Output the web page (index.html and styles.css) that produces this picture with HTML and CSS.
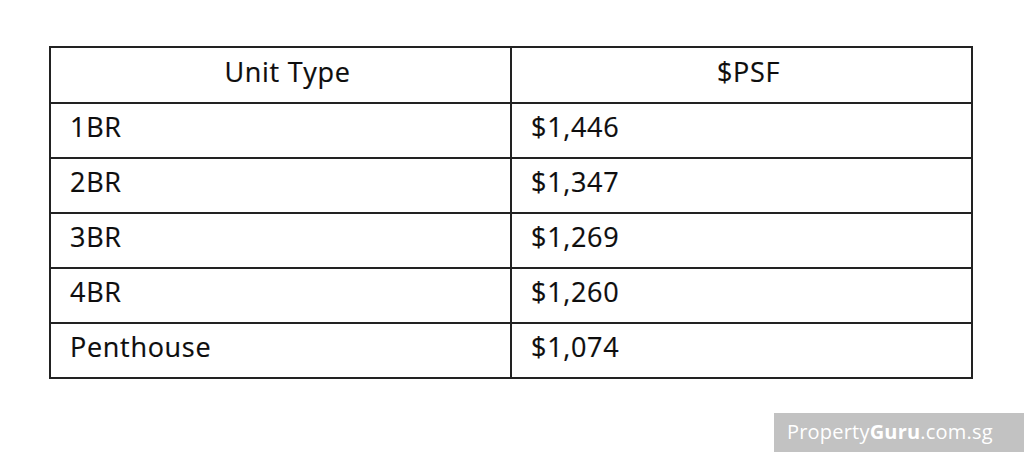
FILE: index.html
```html
<!DOCTYPE html>
<html>
<head>
<meta charset="utf-8">
<link rel="stylesheet" href="styles.css">
</head>
<body>
<div class="page">
  <table class="psf">
    <thead>
      <tr><th class="c1">Unit Type</th><th class="c2">$PSF</th></tr>
    </thead>
    <tbody>
      <tr><td>1BR</td><td>$1,446</td></tr>
      <tr><td>2BR</td><td>$1,347</td></tr>
      <tr><td>3BR</td><td>$1,269</td></tr>
      <tr><td>4BR</td><td>$1,260</td></tr>
      <tr><td>Penthouse</td><td>$1,074</td></tr>
    </tbody>
  </table>
  <div class="mark">Property<b>Guru</b>.com.sg</div>
</div>
</body>
</html>
```
FILE: styles.css
```css
html, body {
  margin: 0;
  padding: 0;
  background: #fff;
}
.page {
  width: 1024px;
  height: 452px;
  position: relative;
  overflow: hidden;
  padding-top: 46px;
  padding-left: 49px;
  box-sizing: border-box;
}
.psf {
  border-collapse: collapse;
  width: 924px;
  font-family: "Open Sans", "Noto Sans", sans-serif;
  font-size: 27px;
  letter-spacing: 0.7px;
  color: #0d0d0d;
  -webkit-text-stroke: 0.2px #0d0d0d;
}
.psf th, .psf td {
  border: 2px solid #222;
  padding: 0 0 7px 19px;
  text-align: left;
  font-weight: normal;
  height: 46px;
  line-height: 30px;
}
.psf th {
  height: 47px;
  text-align: center;
  padding: 0 0 7px 14px;
}
.psf .c1 {
  width: 445px;
}
.mark {
  position: absolute;
  left: 774px;
  top: 413px;
  width: 250px;
  height: 39px;
  background: #c2c2c2;
  color: #fff;
  font-family: "Open Sans", "Noto Sans", sans-serif;
  font-size: 20px;
  line-height: 38px;
  padding-left: 13px;
  box-sizing: border-box;
  letter-spacing: 0.2px;
}
.mark b {
  font-weight: 700;
}
```
